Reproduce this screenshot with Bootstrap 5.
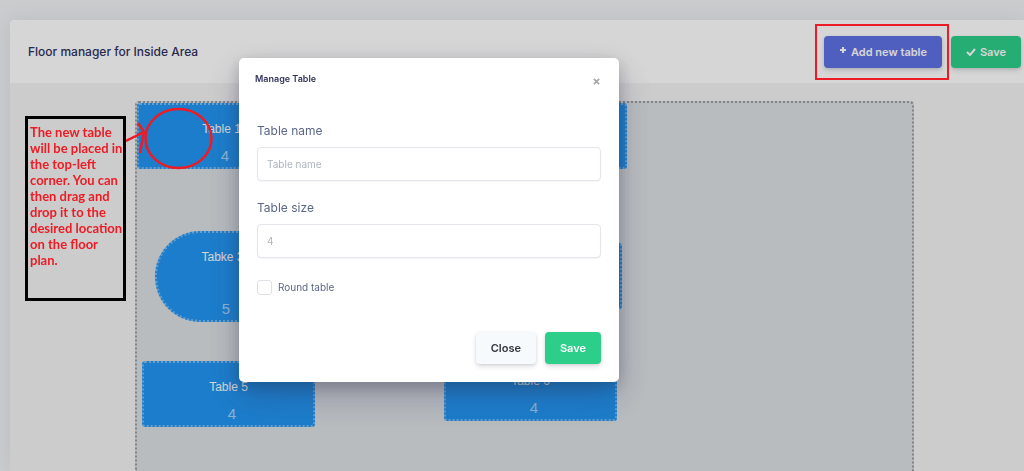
<!DOCTYPE html>
<html lang="en">
<head>
<meta charset="utf-8">
<meta name="viewport" content="width=device-width, initial-scale=1">
<title>Floor manager</title>
<link href="https://cdn.jsdelivr.net/npm/bootstrap@5.3.0/dist/css/bootstrap.min.css" rel="stylesheet">
<style>
  :root { --note-red: #ed1c24; }
  body { font-family: Inter, "Liberation Sans", sans-serif; font-size: 12px; line-height: 18px; color: #525f7f; background: #f2f3f5; }
  .btn { --bs-btn-font-size: 11px; --bs-btn-font-weight: 600; --bs-btn-border-width: 0; --bs-btn-border-radius: 4px; --bs-btn-padding-y: 7px; line-height: 18px; box-shadow: 0 3px 5px rgba(50,50,93,.12), 0 1px 3px rgba(0,0,0,.1); }
  .btn-indigo { --bs-btn-color: #fff; --bs-btn-bg: #5e72e4; --bs-btn-hover-color: #fff; --bs-btn-hover-bg: #4a5fd8; --bs-btn-padding-x: 15px; }
  .btn-mint { --bs-btn-color: #fff; --bs-btn-bg: #2dce89; --bs-btn-hover-color: #fff; --bs-btn-hover-bg: #24b276; --bs-btn-padding-x: 15px; }
  .btn-pale { --bs-btn-color: #32373f; --bs-btn-bg: #f7fafc; --bs-btn-hover-bg: #e9eef3; --bs-btn-padding-x: 15px; }

  /* floor card */
  .floor-card { margin: 20px 0 0 10px; border-radius: 4px 0 0 0; background: #f4f4f5; box-shadow: 0 0 20px rgba(136,152,170,.18); }
  .floor-head { min-height: 63px; padding: 0 3px 0 18px; background: #fff; border-radius: 4px 0 0 0; }
  .floor-head h1 { font-size: 12px; line-height: 18px; font-weight: 500; color: #32325d; }
  .highlight { position: relative; margin-right: 2px; padding: 12px 7px 12px 9px; }
  .highlight::after { content: ""; position: absolute; inset: 0; border: 2px solid var(--note-red); z-index: 1060; pointer-events: none; }
  .floor-body { height: calc(100vh - 83px); }
  .note-col { flex: 0 0 125px; padding: 33px 9px 0 15px; }
  .note-box { position: relative; z-index: 1060; min-height: 185px; padding: 5px 0 0 2px; border: 3px solid #000; color: var(--note-red); font: 700 13px/16px Lato, sans-serif; white-space: nowrap; }
  .note-mark { position: absolute; left: 98px; top: -14px; fill: none; stroke: var(--note-red); stroke-width: 2.5; }
  .floor-plan { position: relative; flex: 0 1 779px; margin-top: 18px; border: 2px dotted #9a9ea2; border-bottom: 0; border-radius: 4px 4px 0 0; background: #dce1e4; }

  /* tables placed freely on the plan */
  .seat { position: absolute; width: 173px; height: 66px; padding: 16px 0 1px; display: flex; flex-direction: column; justify-content: space-between; text-align: center; color: #fff; background: #2196f3; border: 2px dotted #7dbbf0; border-radius: 3px; font: 12px/16px "Liberation Sans", sans-serif; }
  .seat small { font-size: 15px; line-height: 20px; padding-left: 7px; opacity: .6; }
  .seat.narrow { width: 169px; }
  .seat.oval { border-radius: 45px; width: 135px; height: 91px; }

  /* dialog */
  .modal-backdrop { --bs-backdrop-opacity: .16; }
  .modal-dialog { width: 380px; max-width: 100%; margin: 58px 0 0 239px; }
  .modal-content { border: 0; border-radius: 5px; color: #525f7f; box-shadow: 0 15px 35px rgba(50,50,93,.3), 0 5px 15px rgba(0,0,0,.2); }
  .modal-header { min-height: 42px; padding: 0 19px 0 16px; border: 0; }
  .modal-title { font-size: 9px; line-height: 16px; font-weight: 600; color: #32325d; }
  .close-x { border: 0; padding: 4px 0 0; background: none; line-height: 8px; }
  .modal-body { padding: 22px 18px 0; }
  .modal-body label { display: block; color: #5b6788; }
  .form-control { height: 34px; margin: 7px 0 18px; padding: 0 9px; font-size: 10px; border-color: #e3e6ea; border-radius: 4px; box-shadow: 0 1px 1px rgba(50,50,93,.04); }
  .form-control::placeholder { color: #adb5bd; }
  .form-check-input { width: 15px; height: 15px; margin: 0; border-color: #dee2e6; }
  .modal-body .form-check-label { font-size: 10px; margin-left: 6px; }
  .check-row { padding-top: 2px; }
  .modal-footer { padding: 36px 18px 18px; gap: 9px; border: 0; }
  .modal-footer > * { margin: 0; }
</style>
</head>
<body class="modal-open overflow-hidden">
<main class="floor-card">
  <header class="floor-head d-flex align-items-center justify-content-between">
    <h1 class="m-0">Floor manager for Inside Area</h1>
    <div class="d-flex align-items-center">
      <div class="highlight">
        <button class="btn btn-indigo d-flex align-items-center" type="button">
          <svg class="me-1 mb-1" width="8" height="8" viewBox="0 0 8 8" stroke="#fff" stroke-width="2" aria-hidden="true"><path d="M4 1v6M1 4h6"/></svg>Add new table
        </button>
      </div>
      <button class="btn btn-mint d-flex align-items-center" type="button">
        <svg class="me-1" width="10" height="8" viewBox="0 0 10 8" fill="none" stroke="#fff" stroke-width="2" aria-hidden="true"><path d="M1 4l3 3 5-6"/></svg>Save
      </button>
    </div>
  </header>
  <div class="floor-body d-flex">
    <aside class="note-col">
      <div class="note-box">
        The new table<br>will be placed in<br>the top-left<br>corner. You can<br>then drag and<br>drop it to the<br>desired location<br>on the floor<br>plan.
        <svg class="note-mark" width="90" height="70" viewBox="0 0 90 70" aria-hidden="true"><ellipse cx="52.500" cy="33.500" rx="33" ry="29.500"/><path d="M0 36l18-9M12 18l6 9-4 21"/></svg>
      </div>
    </aside>
    <section class="floor-plan" aria-label="Floor plan">
      <div class="seat narrow" style="left:0;top:0">Table 1<small>4</small></div>
      <div class="seat" style="left:317px;top:0">Table 2<small>4</small></div>
      <div class="seat oval" style="left:18px;top:128px">Tabke 3<small>5</small></div>
      <div class="seat" style="left:312px;top:140px">Table 4<small>4</small></div>
      <div class="seat" style="left:5px;top:258px">Table 5<small>4</small></div>
      <div class="seat" style="left:307px;top:252px">Table 6<small>4</small></div>
    </section>
  </div>
</main>

<div class="modal-backdrop show"></div>
<div class="modal d-block" tabindex="-1" role="dialog" aria-labelledby="dlgTitle">
  <div class="modal-dialog">
    <form class="modal-content">
      <div class="modal-header">
        <h2 class="modal-title" id="dlgTitle">Manage Table</h2>
        <button class="close-x" type="button" aria-label="Close"><svg width="7" height="7" viewBox="0 0 8 8" stroke="#a8a8a8" stroke-width="2"><path d="M1 1l6 6M7 1L1 7"/></svg></button>
      </div>
      <div class="modal-body">
        <label for="tname">Table name</label>
        <input class="form-control" id="tname" type="text" placeholder="Table name">
        <label for="tsize">Table size</label>
        <input class="form-control" id="tsize" type="text" placeholder="4">
        <div class="check-row d-flex align-items-center">
          <input class="form-check-input" id="round" type="checkbox">
          <label class="form-check-label" for="round">Round table</label>
        </div>
      </div>
      <div class="modal-footer">
        <button class="btn btn-pale" type="button">Close</button>
        <button class="btn btn-mint" type="button">Save</button>
      </div>
    </form>
  </div>
</div>
<script src="https://cdn.jsdelivr.net/npm/bootstrap@5.3.0/dist/js/bootstrap.bundle.min.js"></script>
</body>
</html>
